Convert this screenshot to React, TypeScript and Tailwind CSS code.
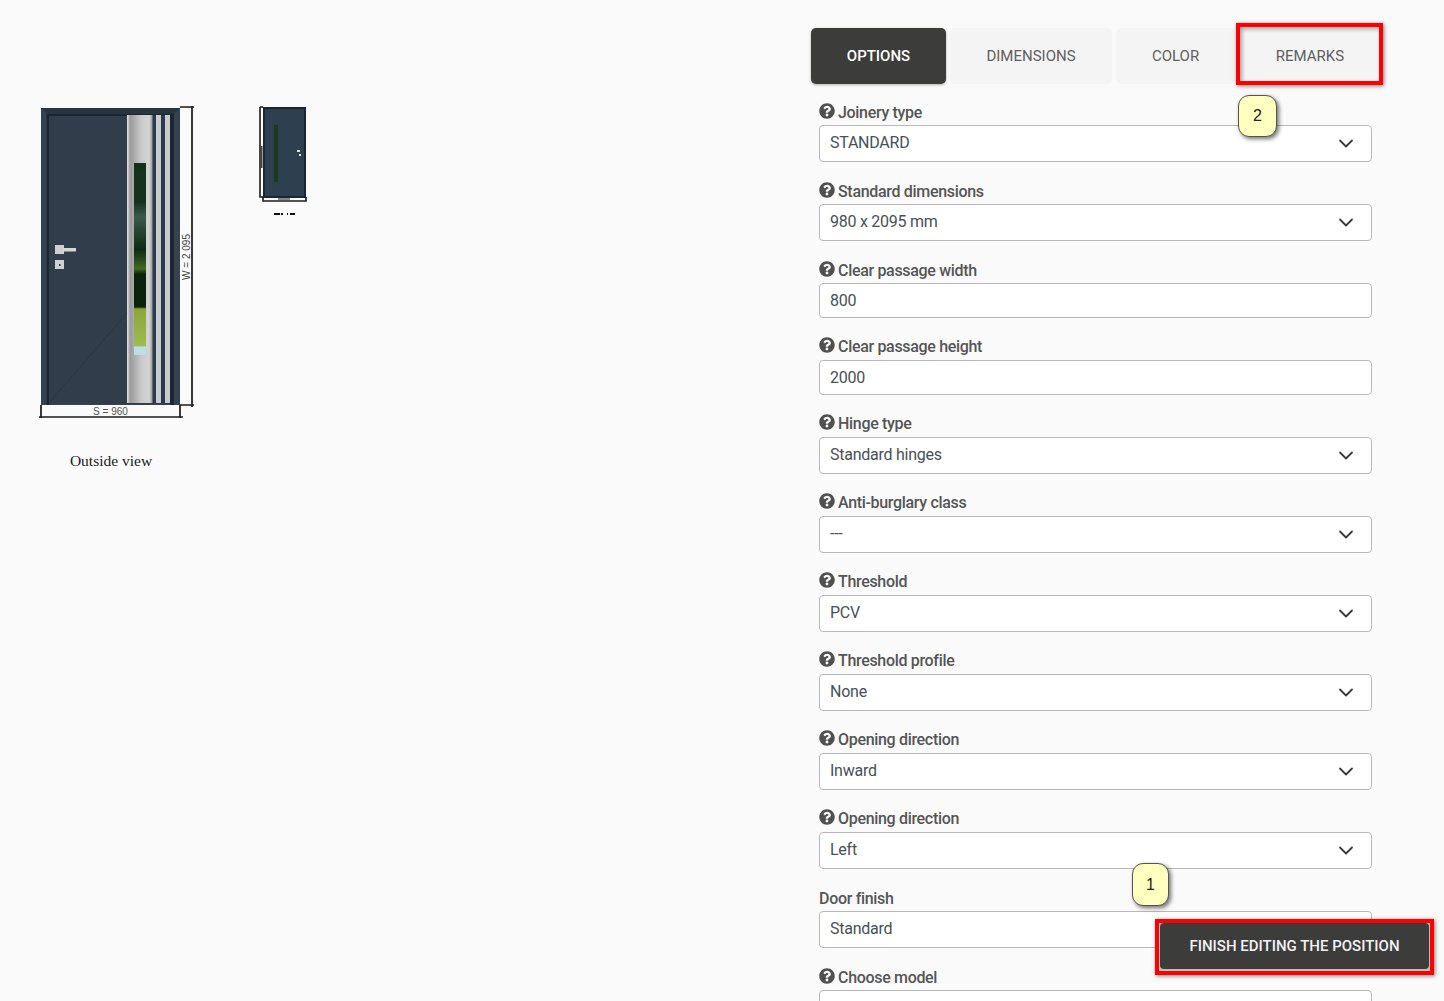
import React from "react";
import { FaQuestionCircle } from "react-icons/fa";

type Field = { label: string; value: string; kind: "select" | "input"; help?: boolean; nudge?: boolean };

const fields: Field[] = [
  { label: "Joinery type", value: "STANDARD", kind: "select", help: true },
  { label: "Standard dimensions", value: "980 x 2095 mm", kind: "select", help: true },
  { label: "Clear passage width", value: "800", kind: "input", help: true },
  { label: "Clear passage height", value: "2000", kind: "input", help: true, nudge: true },
  { label: "Hinge type", value: "Standard hinges", kind: "select", help: true, nudge: true },
  { label: "Anti-burglary class", value: "---", kind: "select", help: true, nudge: true },
  { label: "Threshold", value: "PCV", kind: "select", help: true, nudge: true },
  { label: "Threshold profile", value: "None", kind: "select", help: true, nudge: true },
  { label: "Opening direction", value: "Inward", kind: "select", help: true, nudge: true },
  { label: "Opening direction", value: "Left", kind: "select", help: true, nudge: true },
  { label: "Door finish", value: "Standard", kind: "select" },
  { label: "Choose model", value: "", kind: "select", help: true },
];

function Chevron() {
  return (
    <svg width="16" height="16" viewBox="0 0 16 16" fill="none" className="shrink-0">
      <path d="M2 4.5l6 6 6-6" stroke="#343a40" strokeWidth="1.8" strokeLinecap="round" strokeLinejoin="round" />
    </svg>
  );
}

function FormField({ field }: { field: Field }) {
  return (
    <div className="mb-[21px]">
      <div
        className={`flex h-[21px] items-start gap-[3px] text-[16px] font-medium text-[#555555] ${
          field.nudge ? "leading-[15px]" : "leading-[17px]"
        }`}
      >
        {field.help && (
          <FaQuestionCircle className={`text-[16px] text-[#505050] ${field.nudge ? "mt-[-2px]" : "mt-[-1px]"}`} />
        )}
        <span className="tracking-[-0.32px]">{field.label}</span>
      </div>
      <div
        className={`flex items-center justify-between rounded-[4px] border border-[#b8b8b8] bg-white pl-[10px] pr-[17px] text-[16px] tracking-[-0.25px] text-[#495057] ${
          field.kind === "select" ? "h-[37px]" : "h-[35px]"
        }`}
      >
        <span className={field.kind === "select" ? "mb-[1px]" : ""}>{field.value}</span>
        {field.kind === "select" && <Chevron />}
      </div>
    </div>
  );
}

function DoorDrawing() {
  return (
    <svg width="340" height="480" viewBox="0 0 340 480" className="block">
      <defs>
        <linearGradient id="steel" x1="0" x2="1" y1="0" y2="0">
          <stop offset="0" stopColor="#e8e8e8" />
          <stop offset="0.12" stopColor="#9a9a9a" />
          <stop offset="0.55" stopColor="#c9c9c9" />
          <stop offset="0.85" stopColor="#d4d4d4" />
          <stop offset="1" stopColor="#8f8f8f" />
        </linearGradient>
        <linearGradient id="glass" x1="0" x2="0" y1="0" y2="1">
          <stop offset="0" stopColor="#123018" />
          <stop offset="0.2" stopColor="#16301f" />
          <stop offset="0.28" stopColor="#3c5a4a" />
          <stop offset="0.45" stopColor="#0f2a12" />
          <stop offset="0.55" stopColor="#3f6a22" />
          <stop offset="0.58" stopColor="#0b2008" />
          <stop offset="0.75" stopColor="#0c2008" />
          <stop offset="0.76" stopColor="#8aa838" />
          <stop offset="0.95" stopColor="#9cbc50" />
          <stop offset="0.96" stopColor="#bcdde6" />
          <stop offset="1" stopColor="#bcdde6" />
        </linearGradient>
        <filter id="soft" x="-5%" y="-5%" width="110%" height="110%">
          <feGaussianBlur stdDeviation="0.7" />
        </filter>
      </defs>

      <g filter="url(#soft)">
        {/* large door */}
        <rect x="41" y="108" width="139" height="297" fill="#34424f" />
        <polygon points="41,108 180,108 173,115 48,115" fill="#28343f" />
        <rect x="48" y="115" width="125" height="289" fill="#313e4b" />
        <rect x="46.5" y="114" width="2.5" height="291" fill="#1e2832" />
        <rect x="48" y="114" width="125" height="2" fill="#1e2832" />
        <rect x="170" y="114" width="4" height="291" fill="#1e2832" />
        <rect x="127" y="115" width="26" height="288" fill="url(#steel)" />
        <rect x="134" y="163" width="12" height="192" fill="url(#glass)" />
        <rect x="152.5" y="115" width="3.5" height="288" fill="#2c3b4b" />
        <rect x="156" y="115" width="5" height="288" fill="#c8cacc" />
        <rect x="161" y="115" width="4" height="288" fill="#2c3b4b" />
        <rect x="165" y="115" width="5" height="288" fill="#c8cacc" />
        <line x1="49" y1="403" x2="127" y2="313" stroke="#263340" strokeWidth="0.8" />
        <rect x="55" y="245" width="9" height="9" fill="#cfcfcf" />
        <rect x="63" y="248" width="13" height="3.5" fill="#d6d6d6" />
        <rect x="55" y="260" width="9" height="9" fill="#d0d0d0" />
        <rect x="59" y="264" width="1.5" height="2" fill="#333333" />
        {/* dimensions */}
        <path d="M180 107H194M180 405H194M192 106V407M41 405V418M180 405V418M39 417H183" stroke="#1c1c1c" strokeWidth="1.7" fill="none" />

        {/* small door */}
        <rect x="264" y="108" width="41" height="89" fill="#2f3f4f" stroke="#1c2630" strokeWidth="2" />
        <rect x="274" y="125" width="4" height="57" fill="#1c3a1e" />
        <rect x="297" y="150" width="3" height="2" fill="#e0e0e0" />
        <rect x="299" y="154" width="2" height="2" fill="#e0e0e0" />
        <path d="M260 107V197H263M260 107H263M263 197V201H306V197" stroke="#1c1c1c" strokeWidth="1.6" fill="none" />
        <rect x="260.5" y="146" width="2" height="22" fill="#444444" />
        <rect x="278" y="198" width="12" height="2" fill="#888888" />
        <path d="M274 214h6M281 214h2M287 214h1M290 214h5" stroke="#111111" strokeWidth="2" />
      </g>

      <text x="110.5" y="415" textAnchor="middle" fontFamily="Liberation Sans, sans-serif" fontSize="10" fill="#555555">
        S = 960
      </text>
      <text transform="translate(190 257) rotate(-90)" textAnchor="middle" fontFamily="Liberation Sans, sans-serif" fontSize="10" fill="#444444">
        W = 2 095
      </text>
      <text x="111" y="466" textAnchor="middle" fontFamily="Liberation Serif, serif" fontSize="15.5" fill="#1a1a1a">
        Outside view
      </text>
    </svg>
  );
}

function Badge({ n, className }: { n: string; className: string }) {
  return (
    <div
      className={`absolute flex items-center justify-center rounded-[11px] border border-[#55554a] bg-[#ffffc0] text-[16px] text-[#222222] shadow-[2px_2px_4px_rgba(0,0,0,0.55)] ${className}`}
      style={{ fontFamily: '"Liberation Sans", sans-serif' }}
    >
      {n}
    </div>
  );
}

export default function App() {
  return (
    <div
      className="relative flex h-[1001px] w-[1444px] overflow-hidden bg-[#fafafa]"
      style={{ fontFamily: 'Roboto, "Liberation Sans", sans-serif' }}
    >
      <div className="w-[811px] shrink-0">
        <DoorDrawing />
      </div>

      <div className="w-[569px] shrink-0 pt-[28px]">
        <div className="flex h-[56px] gap-[4px] text-[15px]">
          <div className="flex w-[135px] items-center justify-center rounded-[5px] bg-[#3c3c3b] font-medium text-white shadow-[0_1px_3px_rgba(0,0,0,0.3)]">
            OPTIONS
          </div>
          <div className="flex w-[162px] items-center justify-center rounded-[5px] bg-[#f4f4f4] text-[#5f5f5f]">DIMENSIONS</div>
          <div className="flex w-[119px] items-center justify-center rounded-[5px] bg-[#f4f4f4] text-[#5f5f5f]">COLOR</div>
          <div className="flex w-[140px] items-center justify-center rounded-[5px] bg-[#f4f4f4] pl-[2px] text-[#5f5f5f]">REMARKS</div>
        </div>
        <div className="mt-[20px] px-[8px]">
          {fields.map((f, i) => (
            <FormField key={i} field={f} />
          ))}
        </div>
      </div>

      {/* annotation overlays */}
      <div className="absolute left-[1236px] top-[23px] h-[62px] w-[147px] border-[4px] border-[#ff0000] shadow-[1px_1px_4px_rgba(0,0,0,0.5),inset_2px_2px_4px_rgba(0,0,0,0.35)]" />
      <Badge n="2" className="left-[1238px] top-[95px] h-[42px] w-[39px]" />
      <Badge n="1" className="left-[1132px] top-[863px] h-[43px] w-[37px]" />

      <div className="absolute left-[1155px] top-[919px] flex h-[56px] w-[279px] border-[4px] border-[#ff0000] bg-[#bdbdbd] pb-[2px] pl-[1px] pr-[1px] shadow-[1px_1px_4px_rgba(0,0,0,0.5)]">
        <div className="flex flex-1 items-center justify-center rounded-[4px] bg-[#3c3c3b] pt-[1px] text-[15px] font-medium text-[#f2f2f2]">
          FINISH EDITING THE POSITION
        </div>
      </div>
    </div>
  );
}
